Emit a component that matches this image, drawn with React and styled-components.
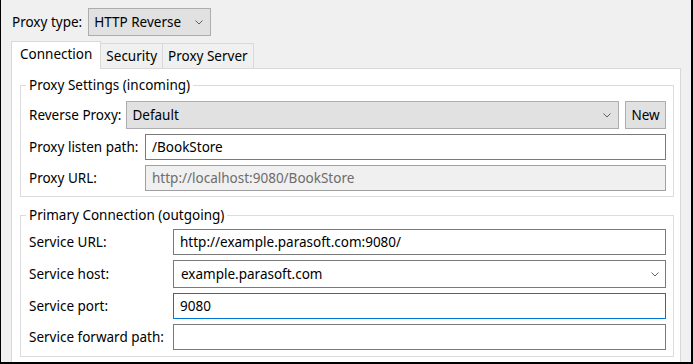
import React from 'react';
import styled, { createGlobalStyle } from 'styled-components';

const GlobalStyle = createGlobalStyle`
  html, body {
    margin: 0;
    padding: 0;
    background: #f0f0f0;
  }
  body {
    font-family: "Noto Sans", "Open Sans", sans-serif;
    font-size: 13.5px;
    color: #000;
  }
`;

const Window = styled.div`
  width: 693px;
  height: 364px;
  box-sizing: border-box;
  background: #f0f0f0;
  border-left: 1px solid #000;
  border-right: 2px solid #000;
  border-bottom: 2px solid #000;
  padding: 8px 10px 0 10px;
  display: flex;
  flex-direction: column;
  overflow: hidden;
`;

const TopRow = styled.div`
  display: flex;
  align-items: center;
  gap: 6px;
  height: 28px;
  padding-left: 1px;
`;

const Label = styled.span`
  white-space: nowrap;
  line-height: 20px;
`;

const Chevron = () => (
  <svg width="8" height="5" viewBox="0 0 8 5">
    <polyline points="0.5,0.5 4,4 7.5,0.5" fill="none" stroke="#606060" strokeWidth="1" />
  </svg>
);

const ComboBox = styled.div`
  display: flex;
  align-items: center;
  justify-content: space-between;
  box-sizing: border-box;
  height: ${(p) => p.$height || 28}px;
  width: ${(p) => (p.$width ? `${p.$width}px` : 'auto')};
  flex: ${(p) => (p.$width ? '0 0 auto' : '1 1 auto')};
  padding: 0 ${(p) => (p.$editable ? 6 : 7)}px 0 ${(p) => (p.$editable ? 7 : 5)}px;
  background: ${(p) => (p.$editable ? '#fff' : '#e1e1e1')};
  border: 1px solid ${(p) => (p.$editable ? '#7a7a7a' : '#adadad')};
  white-space: nowrap;
`;

const Tabs = styled.div`
  display: flex;
  align-items: flex-end;
  height: 27px;
  margin-top: 5px;
`;

const Tab = styled.div`
  position: relative;
  box-sizing: border-box;
  display: flex;
  align-items: center;
  height: ${(p) => (p.$active ? 28 : 25)}px;
  margin-bottom: ${(p) => (p.$active ? -1 : 0)}px;
  padding: 0 ${(p) => (p.$active ? 8 : 5)}px ${(p) => (p.$active ? 3 : 0)}px;
  background: ${(p) => (p.$active ? '#fff' : '#f0f0f0')};
  border: 1px solid #d9d9d9;
  border-bottom: none;
  border-left: ${(p) => (p.$active ? '1px solid #d9d9d9' : 'none')};
  z-index: ${(p) => (p.$active ? 1 : 0)};
  white-space: nowrap;
`;

const Panel = styled.div`
  flex: 1;
  background: #fff;
  border: 1px solid #d9d9d9;
  border-bottom: none;
  padding: 6px 6px 0 8px;
  display: flex;
  flex-direction: column;
  gap: 8px;
`;

const Group = styled.fieldset`
  margin: 0;
  border: 1px solid #dcdcdc;
  padding: 0 7px ${(p) => p.$bottom}px 8px;
  min-width: 0;
`;

const Legend = styled.legend`
  padding: 0 3px;
  margin-left: -3px;
  line-height: 20px;
`;

const Rows = styled.div`
  display: flex;
  flex-direction: column;
  gap: 5px;
  margin-top: ${(p) => p.$top}px;
`;

const FormGrid = styled.div`
  display: grid;
  grid-template-columns: ${(p) => p.$labelWidth}px 1fr;
  column-gap: 5px;
  row-gap: 5px;
  align-items: center;
`;

const InlineRow = styled.div`
  display: flex;
  align-items: center;
  gap: 5px;
`;

const Button = styled.div`
  box-sizing: border-box;
  width: 41px;
  height: 28px;
  display: flex;
  align-items: center;
  justify-content: center;
  background: #e1e1e1;
  border: 1px solid #adadad;
  margin-left: 1px;
`;

const TextField = styled.input`
  box-sizing: border-box;
  width: 100%;
  height: 26px;
  margin: 0;
  padding: 0 6px;
  font: inherit;
  color: ${(p) => (p.disabled ? '#6d6d6d' : '#000')};
  -webkit-text-fill-color: ${(p) => (p.disabled ? '#6d6d6d' : '#000')};
  background: ${(p) => (p.disabled ? '#f0f0f0' : '#fff')};
  border: 1px solid ${(p) => (p.$focused ? '#0078d7' : p.disabled ? '#a0a0a0' : '#7a7a7a')};
  border-radius: 0;
  outline: none;
`;

export default function App() {
  return (
    <>
      <GlobalStyle />
      <Window>
        <TopRow>
          <Label>Proxy type:</Label>
          <ComboBox $width={123}>
            <span>HTTP Reverse</span>
            <Chevron />
          </ComboBox>
        </TopRow>

        <Tabs>
          <Tab $active>Connection</Tab>
          <Tab>Security</Tab>
          <Tab>Proxy Server</Tab>
        </Tabs>

        <Panel>
          <Group $bottom={5}>
            <Legend>Proxy Settings (incoming)</Legend>
            <Rows $top={6}>
              <InlineRow>
                <Label>Reverse Proxy:</Label>
                <ComboBox>
                  <span>Default</span>
                  <Chevron />
                </ComboBox>
                <Button>New</Button>
              </InlineRow>
              <FormGrid $labelWidth={111}>
                <Label>Proxy listen path:</Label>
                <TextField defaultValue="/BookStore" />
                <Label>Proxy URL:</Label>
                <TextField disabled defaultValue="http://localhost:9080/BookStore" />
              </FormGrid>
            </Rows>
          </Group>

          <Group $bottom={6}>
            <Legend>Primary Connection (outgoing)</Legend>
            <Rows $top={4}>
              <FormGrid $labelWidth={139}>
                <Label>Service URL:</Label>
                <TextField defaultValue="http://example.parasoft.com:9080/" />
                <Label>Service host:</Label>
                <ComboBox $editable>
                  <span>example.parasoft.com</span>
                  <Chevron />
                </ComboBox>
                <Label>Service port:</Label>
                <TextField $focused defaultValue="9080" />
                <Label>Service forward path:</Label>
                <TextField defaultValue="" />
              </FormGrid>
            </Rows>
          </Group>
        </Panel>
      </Window>
    </>
  );
}
